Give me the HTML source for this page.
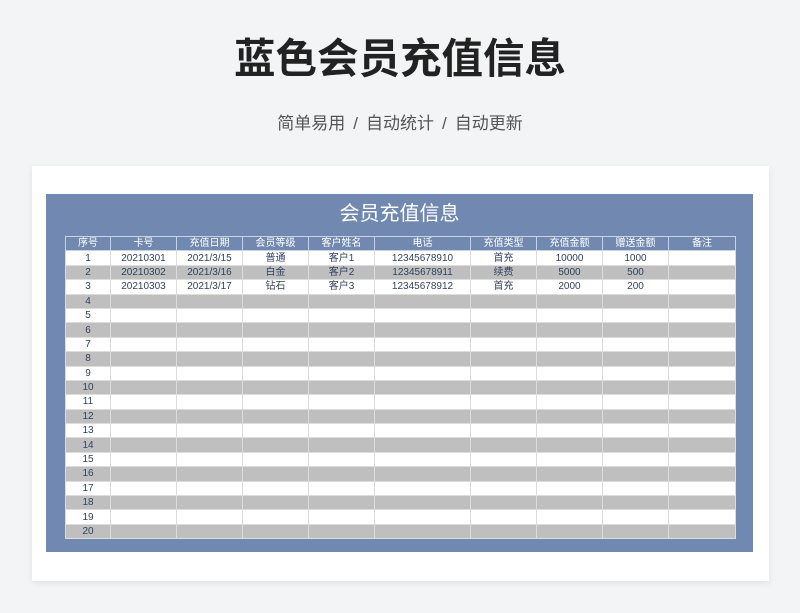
<!DOCTYPE html><html><head><meta charset="utf-8"><style>
body{margin:0;width:800px;height:613px;background:#f3f4f6;font-family:"Liberation Sans","Noto Sans CJK SC",sans-serif;position:relative;overflow:hidden}
h1{position:absolute;top:33px;left:0;width:800px;text-align:center;margin:0;font-size:41.5px;font-weight:bold;color:#222;line-height:52px}
.sub{position:absolute;top:112px;width:800px;text-align:center;font-size:17px;color:#555;line-height:24px}
.sub span{margin:0 8px}
.card{position:absolute;left:32px;top:166px;width:737px;height:415px;background:#fff;box-shadow:0 2px 6px rgba(0,0,0,.08)}
.panel{position:absolute;left:46px;top:194px;width:707px;height:358px;background:#7189b0}
.pt{position:absolute;left:46px;top:200px;width:707px;text-align:center;color:#fff;font-size:20px;line-height:28px}
table{position:absolute;left:65px;top:236px;border-collapse:collapse;width:670px;table-layout:fixed}
td{height:13.4px;padding:0;border:1px solid #dcdcdc;font-size:10px;text-align:center;color:#33425e;line-height:13px;overflow:hidden}
tr.h td{background:#7189b0;color:#fff;border-color:#c9d2e0}
tr.g td{background:#bfbfbf}
tr.w td{background:#fff}
</style></head><body>
<h1>蓝色会员充值信息</h1>
<div class="sub">简单易用<span>/</span>自动统计<span>/</span>自动更新</div>
<div class="card"></div><div class="panel"></div>
<div class="pt">会员充值信息</div>
<table>
<colgroup><col style="width:45px"><col style="width:66px"><col style="width:66px"><col style="width:66px"><col style="width:66px"><col style="width:96px"><col style="width:66px"><col style="width:66px"><col style="width:66px"><col style="width:67px"></colgroup>
<tr class="h"><td>序号</td><td>卡号</td><td>充值日期</td><td>会员等级</td><td>客户姓名</td><td>电话</td><td>充值类型</td><td>充值金额</td><td>赠送金额</td><td>备注</td></tr>
<tr class="w"><td>1</td><td>20210301</td><td>2021/3/15</td><td>普通</td><td>客户1</td><td>12345678910</td><td>首充</td><td>10000</td><td>1000</td><td></td></tr>
<tr class="g"><td>2</td><td>20210302</td><td>2021/3/16</td><td>白金</td><td>客户2</td><td>12345678911</td><td>续费</td><td>5000</td><td>500</td><td></td></tr>
<tr class="w"><td>3</td><td>20210303</td><td>2021/3/17</td><td>钻石</td><td>客户3</td><td>12345678912</td><td>首充</td><td>2000</td><td>200</td><td></td></tr>
<tr class="g"><td>4</td><td></td><td></td><td></td><td></td><td></td><td></td><td></td><td></td><td></td></tr>
<tr class="w"><td>5</td><td></td><td></td><td></td><td></td><td></td><td></td><td></td><td></td><td></td></tr>
<tr class="g"><td>6</td><td></td><td></td><td></td><td></td><td></td><td></td><td></td><td></td><td></td></tr>
<tr class="w"><td>7</td><td></td><td></td><td></td><td></td><td></td><td></td><td></td><td></td><td></td></tr>
<tr class="g"><td>8</td><td></td><td></td><td></td><td></td><td></td><td></td><td></td><td></td><td></td></tr>
<tr class="w"><td>9</td><td></td><td></td><td></td><td></td><td></td><td></td><td></td><td></td><td></td></tr>
<tr class="g"><td>10</td><td></td><td></td><td></td><td></td><td></td><td></td><td></td><td></td><td></td></tr>
<tr class="w"><td>11</td><td></td><td></td><td></td><td></td><td></td><td></td><td></td><td></td><td></td></tr>
<tr class="g"><td>12</td><td></td><td></td><td></td><td></td><td></td><td></td><td></td><td></td><td></td></tr>
<tr class="w"><td>13</td><td></td><td></td><td></td><td></td><td></td><td></td><td></td><td></td><td></td></tr>
<tr class="g"><td>14</td><td></td><td></td><td></td><td></td><td></td><td></td><td></td><td></td><td></td></tr>
<tr class="w"><td>15</td><td></td><td></td><td></td><td></td><td></td><td></td><td></td><td></td><td></td></tr>
<tr class="g"><td>16</td><td></td><td></td><td></td><td></td><td></td><td></td><td></td><td></td><td></td></tr>
<tr class="w"><td>17</td><td></td><td></td><td></td><td></td><td></td><td></td><td></td><td></td><td></td></tr>
<tr class="g"><td>18</td><td></td><td></td><td></td><td></td><td></td><td></td><td></td><td></td><td></td></tr>
<tr class="w"><td>19</td><td></td><td></td><td></td><td></td><td></td><td></td><td></td><td></td><td></td></tr>
<tr class="g"><td>20</td><td></td><td></td><td></td><td></td><td></td><td></td><td></td><td></td><td></td></tr>
</table>
</body></html>
